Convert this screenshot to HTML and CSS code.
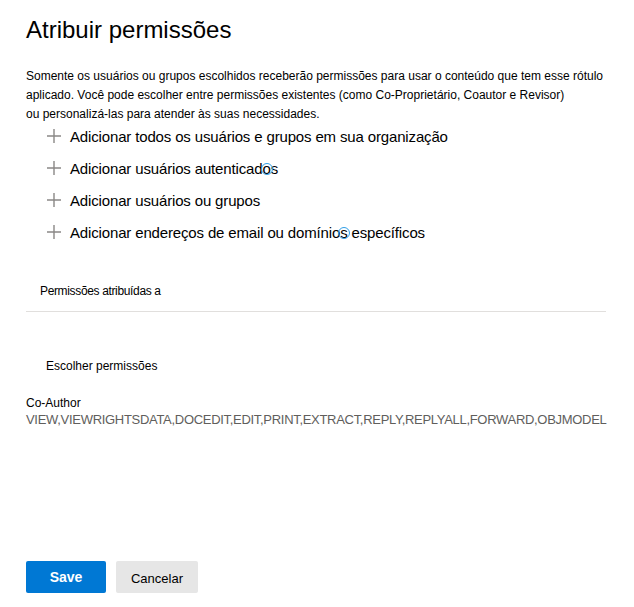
FILE: index.html
```html
<!DOCTYPE html>
<html lang="pt">
<head>
  <meta charset="UTF-8">
  <title>Atribuir permissões</title>
  <meta name="viewport" content="width=device-width, initial-scale=1.0">
  <link rel="stylesheet" href="styles.css">
</head>
<body>
  <div class="panel">
    <h1 class="title">Atribuir permissões</h1>

    <p class="intro">
      Somente os usuários ou grupos escolhidos receberão permissões para usar o conteúdo que tem esse rótulo<br>
      aplicado. Você pode escolher entre permissões existentes (como Co-Proprietário, Coautor e Revisor)<br>
      ou personalizá-las para atender às suas necessidades.
    </p>

    <ul class="add-list">
      <li class="add-item">
        <svg class="plus" width="16" height="16" viewBox="0 0 16 16"><path d="M8 1v14M1 8h14"/></svg>
        <span>Adicionar todos os usuários e grupos em sua organização</span>
      </li>
      <li class="add-item">
        <svg class="plus" width="16" height="16" viewBox="0 0 16 16"><path d="M8 1v14M1 8h14"/></svg>
        <span>Adicionar usuários autenticad<span class="ring-wrap">o<i class="ring"></i></span>s</span>
      </li>
      <li class="add-item">
        <svg class="plus" width="16" height="16" viewBox="0 0 16 16"><path d="M8 1v14M1 8h14"/></svg>
        <span>Adicionar usuários ou grupos</span>
      </li>
      <li class="add-item">
        <svg class="plus" width="16" height="16" viewBox="0 0 16 16"><path d="M8 1v14M1 8h14"/></svg>
        <span>Adicionar endereços de email ou domínio<span class="ring-wrap">s<i class="ring"></i></span> específicos</span>
      </li>
    </ul>

    <div class="assigned">Permissões atribuídas a</div>

    <div class="choose">Escolher permissões</div>

    <div class="perm">
      <div class="perm-name">Co-Author</div>
      <div class="perm-rights">VIEW,VIEWRIGHTSDATA,DOCEDIT,EDIT,PRINT,EXTRACT,REPLY,REPLYALL,FORWARD,OBJMODEL</div>
    </div>

    <div class="actions">
      <button class="btn btn-primary">Save</button>
      <button class="btn btn-default">Cancelar</button>
    </div>
  </div>
</body>
</html>
```

FILE: styles.css
```css
html, body {
  margin: 0;
  padding: 0;
  background-color: #fff;
}
body {
  font-family: "Liberation Sans", Arial, sans-serif;
  color: #000;
}
.panel {
  display: flex;
  flex-direction: column;
  min-height: 100vh;
  box-sizing: border-box;
  padding: 14px 28px 14px 26px;
}
.title {
  margin: 0;
  font-size: 24px;
  line-height: 32px;
  font-weight: normal;
  color: #000;
}
.intro {
  margin: 21px 0 0;
  font-size: 12px;
  line-height: 19px;
  white-space: nowrap;
  color: #000;
}
.add-list {
  list-style: none;
  margin: -4px 0 0;
  padding: 0 0 0 20px;
}
.add-item {
  display: flex;
  align-items: center;
  gap: 8px;
  height: 32px;
  font-size: 15px;
  letter-spacing: -0.15px;
  white-space: nowrap;
}
.plus {
  flex: none;
  margin-top: -1px;
}
.plus path {
  stroke: #8a8886;
  stroke-width: 1.4;
  fill: none;
}
.ring-wrap {
  position: relative;
  display: inline-block;
}
.ring {
  display: block;
  position: absolute;
  left: 50%;
  top: 50%;
  width: 10px;
  height: 10px;
  margin: -5px 0 0 -6px;
  border: 1.5px solid #2f9ee6;
  border-radius: 50%;
}
.assigned {
  margin-top: 35px;
  padding: 0 0 12px 14px;
  font-size: 12px;
  line-height: 16px;
  letter-spacing: -0.35px;
  border-bottom: 1px solid #e1dfdd;
}
.choose {
  margin-top: 46px;
  padding-left: 20px;
  font-size: 12px;
  line-height: 16px;
}
.perm {
  margin-top: 21px;
}
.perm-name {
  font-size: 12px;
  line-height: 16px;
}
.perm-rights {
  font-size: 13px;
  line-height: 17px;
  letter-spacing: -0.3px;
  color: #605e5c;
  white-space: nowrap;
}
.actions {
  margin-top: auto;
  display: flex;
  gap: 10px;
}
.btn {
  height: 32px;
  border: none;
  border-radius: 2px;
  font-family: "Liberation Sans", Arial, sans-serif;
  cursor: pointer;
}
.btn-primary {
  width: 80px;
  background-color: #0078d4;
  color: #fff;
  font-weight: bold;
  font-size: 14px;
}
.btn-default {
  width: 82px;
  background-color: #e6e6e6;
  color: #000;
  font-size: 13px;
  padding-top: 3px;
}
```
